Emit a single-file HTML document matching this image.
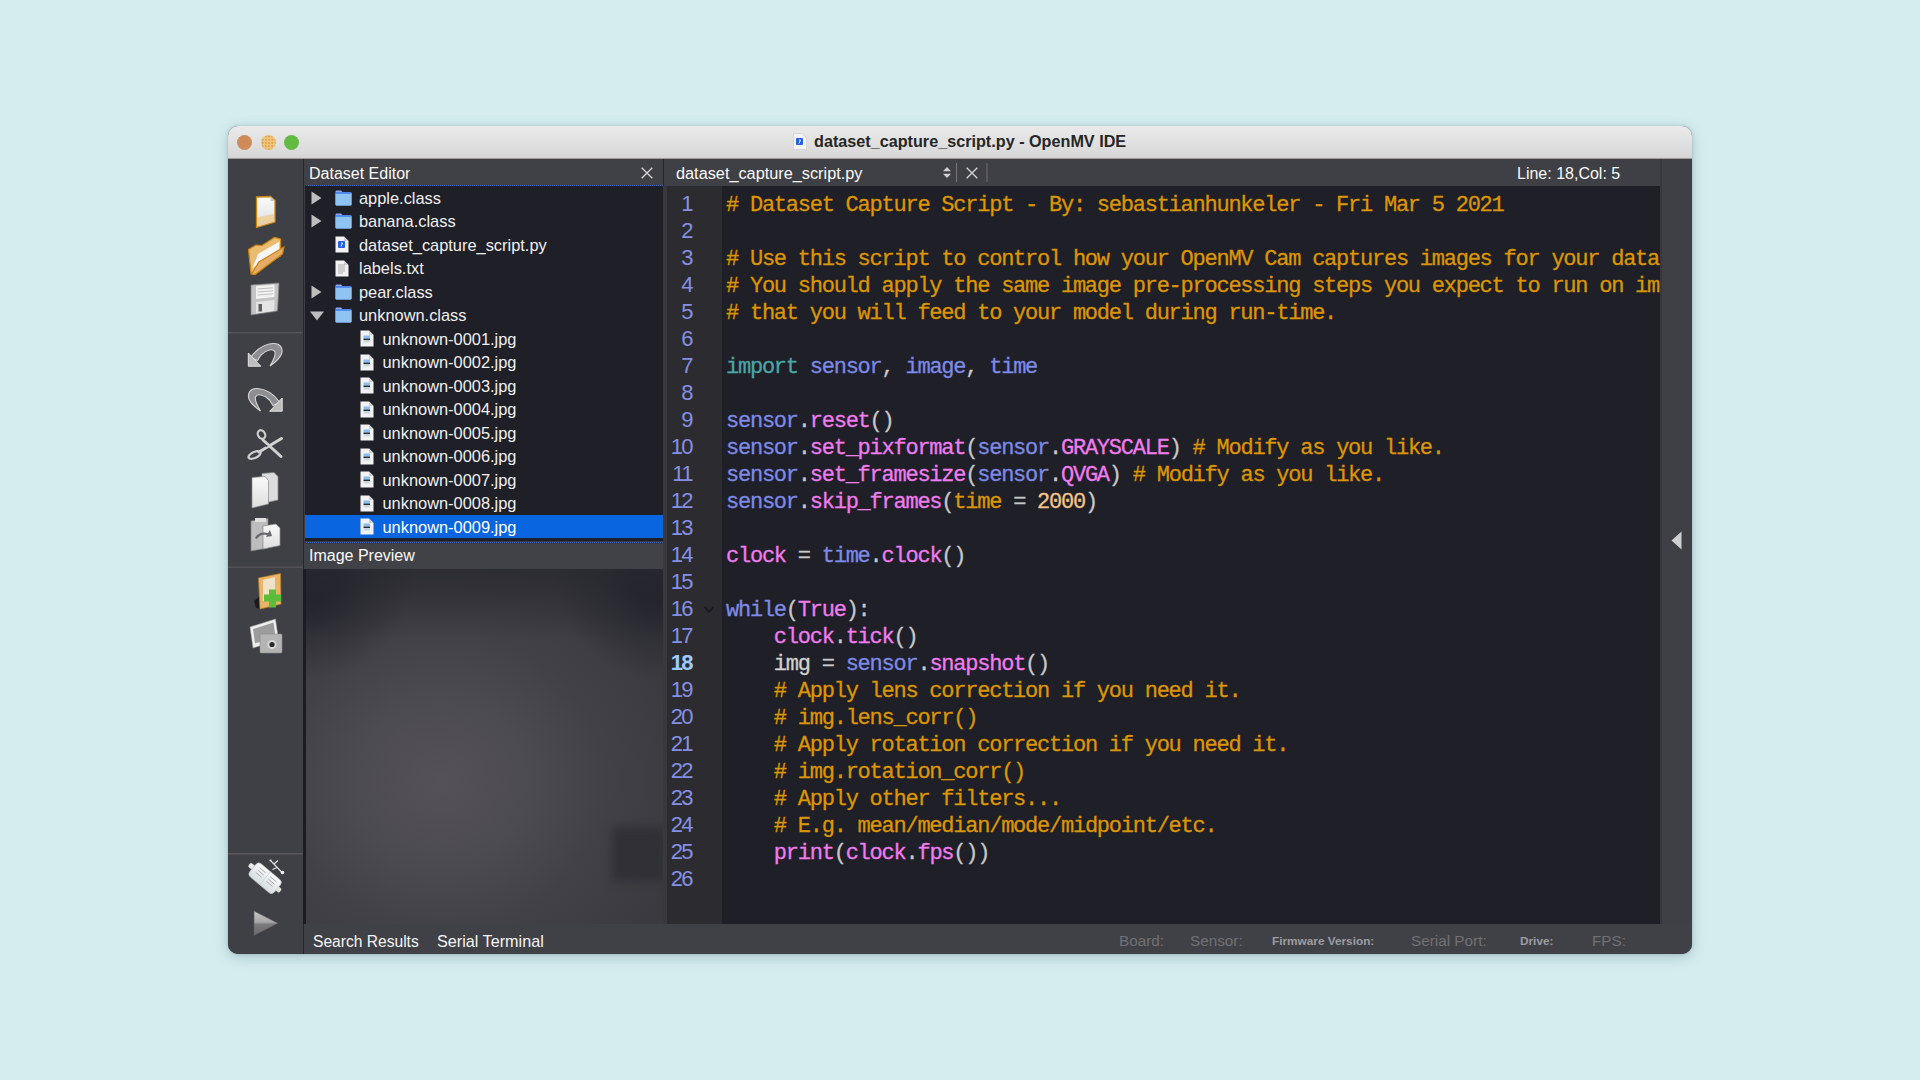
<!DOCTYPE html>
<html><head><meta charset="utf-8">
<style>
*{margin:0;padding:0;box-sizing:border-box}
html,body{width:1920px;height:1080px;overflow:hidden;background:#d5edef;font-family:"Liberation Sans",sans-serif}
div,span,svg{position:absolute}
#shadow{left:228px;top:126px;width:1464px;height:828px;border-radius:10px;box-shadow:0 3px 13px rgba(60,100,105,0.30),0 0 3px rgba(40,70,75,0.22)}
#win{left:228px;top:126px;width:1464px;height:828px;border-radius:10px;background:#3e3f44;overflow:hidden}
#title{left:0;top:0;width:1464px;height:33px;background:linear-gradient(#eaeaea,#dadada 85%,#d3d3d3);border-bottom:1.5px solid #a29c98}
.tl{top:9px;width:15px;height:15px;border-radius:50%}
#ttext{left:586px;top:6px;font-size:16.2px;font-weight:bold;color:#262626;line-height:18px;white-space:nowrap}
#tool{left:0;top:33px;width:75px;height:795px;background:#3f4045}
.vd{background:#26262b}
.phead{color:#fafafa;font-size:16px;line-height:18px;white-space:nowrap}
.row{left:0;width:358px;height:23.5px;color:#f0f0f0;font-size:16.4px;line-height:23.5px;white-space:nowrap}
.row.sel{background:#0a66e0;color:#fff}
.row span{top:0.8px}
.ln{left:0;width:464px;text-align:right;font-size:22px;letter-spacing:-1.6px;line-height:27px;margin-top:-2px;color:#8590e4;white-space:nowrap}
.ln.cur{font-weight:bold;color:#9fcbff}
.cl{left:498px;font-family:"Liberation Mono",monospace;font-size:22px;letter-spacing:-1.24px;line-height:27px;white-space:pre;color:#c8c8c8;-webkit-text-stroke:0.3px currentColor}
.cl span{position:static}
.c{color:#dc9602}.s{color:#7d8ae6}.p{color:#f07cee}.k{color:#4aa6a6}.w{color:#c8c8c8}.o{color:#f5c58a}.g{color:#d2d2cf}
.st{font-size:15.6px;color:#f4f4f4;line-height:18px;white-space:nowrap}
.sg{color:#707075;font-size:15.3px;line-height:18px;white-space:nowrap}
.sb{color:#9d9da2;font-size:11.8px;font-weight:bold;line-height:14px;white-space:nowrap}
</style></head><body>
<div id="shadow"></div>
<div id="win">
  <div id="title">
    <div class="tl" style="left:9px;background:#cf8a5a"></div>
    <div class="tl" style="left:32.5px;background:radial-gradient(circle,#e2a040 0.8px,transparent 1.1px) 0 0/3.2px 3.2px,#efc47e"></div>
    <div class="tl" style="left:56px;background:#64bb44"></div>
    <svg style="left:565px;top:7px" width="14" height="17" viewBox="0 0 14 17"><path d="M0.5 0.5 L9 0.5 L13.5 5 L13.5 16.5 L0.5 16.5Z" fill="#f4f4f4" stroke="#c8c8c8" stroke-width="0.6"/><rect x="3" y="5" width="7" height="7" rx="1" fill="#2463e0"/><path d="M6 7 L7.5 7 L6 10.5" stroke="#fff" stroke-width="0.9" fill="none"/></svg>
    <div id="ttext">dataset_capture_script.py - OpenMV IDE</div>
  </div>
  <div id="tool"></div>
<svg style="left:0;top:32px" width="75" height="796" viewBox="228 158 75 796">
<defs>
<linearGradient id="pap" x1="0" y1="0" x2="0" y2="1"><stop offset="0" stop-color="#fafafa"/><stop offset="1" stop-color="#dedede"/></linearGradient>
<linearGradient id="arr" x1="0" y1="0" x2="1" y2="1"><stop offset="0" stop-color="#dcdcdc"/><stop offset="0.5" stop-color="#9c9c9c"/><stop offset="1" stop-color="#d0d0d0"/></linearGradient>
<linearGradient id="play" x1="0" y1="0" x2="0" y2="1"><stop offset="0" stop-color="#c4c4c4"/><stop offset="0.45" stop-color="#a8a8a8"/><stop offset="0.55" stop-color="#7a7a7c"/><stop offset="1" stop-color="#6a6a6d"/></linearGradient>
<linearGradient id="usb" x1="0" y1="0" x2="0" y2="1"><stop offset="0" stop-color="#fafafa"/><stop offset="1" stop-color="#d6dde0"/></linearGradient>
</defs>
<!-- separators -->
<rect x="228" y="332" width="75" height="1.3" fill="#56555b"/>
<rect x="228" y="566.5" width="75" height="1.3" fill="#56555b"/>
<rect x="228" y="853" width="75" height="1.5" fill="#58565c"/>
<!-- new file -->
<path d="M256.5,197 L270.5,196.5 L275,200.5 L275,222 L256.5,227.5Z" fill="url(#pap)" stroke="#c8860f" stroke-width="1.3"/>
<path d="M270.5,196.5 L270.5,201 L275,201Z" fill="#c9c9c9"/>
<path d="M257.5,217 L274.3,214 L274.3,221.5 L257.5,226.5Z" fill="#f0c070" opacity="0.55"/>
<!-- open folder -->
<path d="M248.5,249.5 L256,245 L262,245.5 L274.5,237.5 L280.5,239 L280.5,256 L251,273.5Z" fill="#ebbb70" stroke="#c8860f" stroke-width="1.2"/>
<path d="M252.5,268 L258,254 L279.5,241.5 L279,252Z" fill="#f6f6f6"/>
<path d="M251.5,274 L259,262 L284,247 L282.5,254 L255,274.5Z" fill="#e6ac68" stroke="#c8860f" stroke-width="1.2"/>
<!-- floppy -->
<path d="M251,285 L279,283 L277.5,311 L251,315Z" fill="#c4c4c4" stroke="#7e7e80" stroke-width="0.8"/>
<path d="M256,286 L274.5,284.5 L274.5,297 L256,299Z" fill="#f2f2f2"/>
<path d="M257.5,289 L273,287.8 M257.5,292 L273,290.8 M257.5,295 L273,293.8" stroke="#b0b0b0" stroke-width="0.8"/>
<path d="M256,302 L274.5,300 L274,311 L256,313.5Z" fill="#e4e4e4"/>
<rect x="258.5" y="304" width="3.5" height="7.5" fill="#5e5e60"/>
<!-- undo -->
<g id="undo">
<path d="M250.5,357.5 C256,350 264,344 273,343.5 C280,343 283.5,348 281.5,354 C279.5,359 275,362.5 270,366 C273,361 276,356 275,352 C273.5,348.5 267,349 261,355 L257.5,360.5 Z" fill="#8e8e92" stroke="#d6d6d6" stroke-width="1.1"/>
<path d="M248.3,353 L248.3,366.2 L260.8,366.2 Z" fill="#bdbdbd" stroke="#e2e2e2" stroke-width="1"/>
</g>
<!-- redo -->
<g transform="translate(530.5,45) scale(-1,1)">
<path d="M250.5,357.5 C256,350 264,344 273,343.5 C280,343 283.5,348 281.5,354 C279.5,359 275,362.5 270,366 C273,361 276,356 275,352 C273.5,348.5 267,349 261,355 L257.5,360.5 Z" fill="#8e8e92" stroke="#d6d6d6" stroke-width="1.1"/>
<path d="M248.3,353 L248.3,366.2 L260.8,366.2 Z" fill="#bdbdbd" stroke="#e2e2e2" stroke-width="1"/>
</g>
<!-- scissors -->
<path d="M263,440 L281,456.5" stroke="#d2d2d2" stroke-width="3" stroke-linecap="round"/>
<path d="M259,452 L281.5,438.5" stroke="#d2d2d2" stroke-width="3" stroke-linecap="round"/>
<ellipse cx="261.5" cy="434.5" rx="3.5" ry="4.5" fill="none" stroke="#cfcfcf" stroke-width="2.2" transform="rotate(-30 261.5 434.5)"/>
<ellipse cx="254.5" cy="455" rx="6.5" ry="3" fill="none" stroke="#cfcfcf" stroke-width="2.2" transform="rotate(-25 254.5 455)"/>
<circle cx="266.5" cy="446" r="1" fill="#444"/>
<!-- copy -->
<path d="M262,473.5 L274,472.5 L278,476.5 L278,500 L262,503.5Z" fill="#dcdcdc" stroke="#8a8a8c" stroke-width="0.7"/>
<path d="M252,477.5 L265,476.5 L268.5,480.5 L268.5,504 L252,508Z" fill="url(#pap)" stroke="#8a8a8c" stroke-width="0.7"/>
<!-- paste -->
<path d="M251,521 L268,518.5 L268,548 L251,551Z" fill="#bdbdbd" stroke="#808082" stroke-width="0.7"/>
<rect x="255" y="518" width="11" height="4" fill="#e0e0e0"/>
<path d="M263,526 L276,524 L280,528 L280,545.5 L263,549Z" fill="url(#pap)" stroke="#8a8a8c" stroke-width="0.7"/>
<path d="M255,538 C258,532 264,532 268,533 L270,530 L272,536 L266,537 L267,535 C263,534 259,535 257,539Z" fill="#6a6a6c"/>
<!-- dataset add -->
<path d="M254,601 L260,596 L260,609 L256,608Z" fill="#1c1c1e"/>
<path d="M258.5,578 L280.5,573.5 L281,604 L260,609Z" fill="#e8b46a" stroke="#c08020" stroke-width="0.7"/>
<path d="M263,580 L275,577 L275,598 L263,601Z" fill="#f4f0e8" opacity="0.75"/>
<rect x="264" y="594.5" width="17" height="7" fill="#5cbd3a"/>
<rect x="269" y="589.5" width="7" height="18" fill="#5cbd3a"/>
<!-- camera + photo -->
<path d="M250,627 L275.5,619 L278.5,640 L253,648Z" fill="#f0f0f0" stroke="#9a9a9a" stroke-width="0.6"/>
<path d="M253,629 L273.5,622.5 L275.5,637 L255,643.5Z" fill="#9c9c9c"/>
<rect x="260" y="634" width="22" height="19" rx="1" fill="#b4b4b4" stroke="#8a8a8a" stroke-width="0.6"/>
<circle cx="272" cy="644.5" r="4.5" fill="#d8d8d8"/>
<circle cx="272" cy="644.5" r="2.6" fill="#2a2a2a"/>
<!-- usb -->
<g transform="rotate(40 264 878)">
<rect x="244" y="874.5" width="6" height="5" rx="1.5" fill="#e8e8e8"/>
<rect x="249" y="869" width="32" height="17" rx="4" fill="url(#usb)" stroke="#b9c4c8" stroke-width="0.6"/>
<rect x="280" y="875" width="5" height="5" rx="1.5" fill="#e0e0e0"/>
<path d="M254,873 L262,873 M254,876 L262,876 M254,879 L262,879 M268,873 L276,873 M268,876 L276,876 M268,879 L276,879" stroke="#a8a8a8" stroke-width="0.9"/>
<path d="M265,869 L265,886" stroke="#c8d4d8" stroke-width="0.8"/>
</g>
<path d="M271,861 L282,872.5 M274,864 L278,860.5 M277,867.5 L272.5,869.5" stroke="#e6e6e6" stroke-width="1.1" fill="none"/>
<circle cx="282.5" cy="872.5" r="1.8" fill="#eeeeee"/>
<circle cx="270.5" cy="860.5" r="1.1" fill="#eeeeee"/>
<!-- play -->
<path d="M254,911 L254,935.5 L278,923.2Z" fill="url(#play)" stroke="#5a5a5c" stroke-width="0.6"/>
</svg>

  <div class="vd" style="left:75px;top:33px;width:1px;height:795px"></div>
  <!-- dataset panel -->
  <div style="left:76px;top:33px;width:359px;height:26px;background:#404146"></div>
  <div class="phead" style="left:81px;top:39px">Dataset Editor</div>
  <svg style="left:413px;top:41px" width="12" height="12" viewBox="0 0 12 12"><path d="M0.7 0.7 L11.3 11.3 M11.3 0.7 L0.7 11.3" stroke="#d6d6d6" stroke-width="1.3"/></svg>
  <div style="left:80px;top:59px;width:355px;height:1px;border-top:1px dotted #3a64c8"></div>
  <div id="tree" style="left:77px;top:60px;width:358px;height:354.5px;background:#1f1f28;overflow:hidden">
<div class="row" style="top:-0.2px"><svg class="arr" style="left:6px;top:5px" width="11" height="14" viewBox="0 0 11 14"><path d="M0.5 0.5 L10.5 7 L0.5 13.5Z" fill="#bdbdbd"/></svg><svg class="ico" style="left:30px;top:4px" width="17" height="16" viewBox="0 0 17 16"><path d="M0.5 1.5 Q0.5 0.5 1.5 0.5 L6 0.5 L7.5 2 L15.5 2 Q16.5 2 16.5 3 L16.5 14.5 Q16.5 15.5 15.5 15.5 L1.5 15.5 Q0.5 15.5 0.5 14.5Z" fill="#8fa3f0"/><rect x="0.5" y="3" width="16" height="12.5" rx="1" fill="#8ec3f2"/><rect x="1" y="2.4" width="15" height="1.2" fill="#2d6fe8"/></svg><span style="left:54px">apple.class</span></div>
<div class="row" style="top:23.3px"><svg class="arr" style="left:6px;top:5px" width="11" height="14" viewBox="0 0 11 14"><path d="M0.5 0.5 L10.5 7 L0.5 13.5Z" fill="#bdbdbd"/></svg><svg class="ico" style="left:30px;top:4px" width="17" height="16" viewBox="0 0 17 16"><path d="M0.5 1.5 Q0.5 0.5 1.5 0.5 L6 0.5 L7.5 2 L15.5 2 Q16.5 2 16.5 3 L16.5 14.5 Q16.5 15.5 15.5 15.5 L1.5 15.5 Q0.5 15.5 0.5 14.5Z" fill="#8fa3f0"/><rect x="0.5" y="3" width="16" height="12.5" rx="1" fill="#8ec3f2"/><rect x="1" y="2.4" width="15" height="1.2" fill="#2d6fe8"/></svg><span style="left:54px">banana.class</span></div>
<div class="row" style="top:46.8px"><svg class="ico" style="left:30px;top:3.5px" width="14" height="17" viewBox="0 0 14 17"><path d="M0.5 0.5 L9 0.5 L13.5 5 L13.5 16.5 L0.5 16.5Z" fill="#f2f2f2"/><path d="M9 0.5 L9 5 L13.5 5" fill="#d0d0d0"/><rect x="3" y="5" width="7" height="7" rx="1" fill="#2463e0"/><path d="M6 7 L7.5 7 L6 10.5" stroke="#fff" stroke-width="0.9" fill="none"/></svg><span style="left:54px">dataset_capture_script.py</span></div>
<div class="row" style="top:70.3px"><svg class="ico" style="left:30px;top:3.5px" width="14" height="17" viewBox="0 0 14 17"><path d="M0.5 0.5 L9 0.5 L13.5 5 L13.5 16.5 L0.5 16.5Z" fill="#f2f2f2"/><path d="M9 0.5 L9 5 L13.5 5" fill="#d0d0d0"/><path d="M3 5H10M3 7H10M3 9H10M3 11H10M3 13H8" stroke="#9a9a9a" stroke-width="0.8"/></svg><span style="left:54px">labels.txt</span></div>
<div class="row" style="top:93.8px"><svg class="arr" style="left:6px;top:5px" width="11" height="14" viewBox="0 0 11 14"><path d="M0.5 0.5 L10.5 7 L0.5 13.5Z" fill="#bdbdbd"/></svg><svg class="ico" style="left:30px;top:4px" width="17" height="16" viewBox="0 0 17 16"><path d="M0.5 1.5 Q0.5 0.5 1.5 0.5 L6 0.5 L7.5 2 L15.5 2 Q16.5 2 16.5 3 L16.5 14.5 Q16.5 15.5 15.5 15.5 L1.5 15.5 Q0.5 15.5 0.5 14.5Z" fill="#8fa3f0"/><rect x="0.5" y="3" width="16" height="12.5" rx="1" fill="#8ec3f2"/><rect x="1" y="2.4" width="15" height="1.2" fill="#2d6fe8"/></svg><span style="left:54px">pear.class</span></div>
<div class="row" style="top:117.3px"><svg class="arr" style="left:4.5px;top:8px" width="14" height="10" viewBox="0 0 14 10"><path d="M0 0.5 L14 0.5 L7 9.5Z" fill="#bdbdbd"/></svg><svg class="ico" style="left:30px;top:4px" width="17" height="16" viewBox="0 0 17 16"><path d="M0.5 1.5 Q0.5 0.5 1.5 0.5 L6 0.5 L7.5 2 L15.5 2 Q16.5 2 16.5 3 L16.5 14.5 Q16.5 15.5 15.5 15.5 L1.5 15.5 Q0.5 15.5 0.5 14.5Z" fill="#8fa3f0"/><rect x="0.5" y="3" width="16" height="12.5" rx="1" fill="#8ec3f2"/><rect x="1" y="2.4" width="15" height="1.2" fill="#2d6fe8"/></svg><span style="left:54px">unknown.class</span></div>
<div class="row" style="top:140.8px"><svg class="ico" style="left:55px;top:3.5px" width="14" height="17" viewBox="0 0 14 17"><path d="M0.5 0.5 L9 0.5 L13.5 5 L13.5 16.5 L0.5 16.5Z" fill="#f2f2f2"/><path d="M9 0.5 L9 5 L13.5 5" fill="#d0d0d0"/><rect x="3.5" y="5.5" width="6.5" height="3.3" fill="#86c0f0"/><rect x="3.5" y="8.6" width="6.5" height="1.4" fill="#2a2a30"/><rect x="3.5" y="10" width="6.5" height="2.5" fill="#c8d8e0"/></svg><span style="left:77.5px">unknown-0001.jpg</span></div>
<div class="row" style="top:164.3px"><svg class="ico" style="left:55px;top:3.5px" width="14" height="17" viewBox="0 0 14 17"><path d="M0.5 0.5 L9 0.5 L13.5 5 L13.5 16.5 L0.5 16.5Z" fill="#f2f2f2"/><path d="M9 0.5 L9 5 L13.5 5" fill="#d0d0d0"/><rect x="3.5" y="5.5" width="6.5" height="3.3" fill="#86c0f0"/><rect x="3.5" y="8.6" width="6.5" height="1.4" fill="#2a2a30"/><rect x="3.5" y="10" width="6.5" height="2.5" fill="#c8d8e0"/></svg><span style="left:77.5px">unknown-0002.jpg</span></div>
<div class="row" style="top:187.8px"><svg class="ico" style="left:55px;top:3.5px" width="14" height="17" viewBox="0 0 14 17"><path d="M0.5 0.5 L9 0.5 L13.5 5 L13.5 16.5 L0.5 16.5Z" fill="#f2f2f2"/><path d="M9 0.5 L9 5 L13.5 5" fill="#d0d0d0"/><rect x="3.5" y="5.5" width="6.5" height="3.3" fill="#86c0f0"/><rect x="3.5" y="8.6" width="6.5" height="1.4" fill="#2a2a30"/><rect x="3.5" y="10" width="6.5" height="2.5" fill="#c8d8e0"/></svg><span style="left:77.5px">unknown-0003.jpg</span></div>
<div class="row" style="top:211.3px"><svg class="ico" style="left:55px;top:3.5px" width="14" height="17" viewBox="0 0 14 17"><path d="M0.5 0.5 L9 0.5 L13.5 5 L13.5 16.5 L0.5 16.5Z" fill="#f2f2f2"/><path d="M9 0.5 L9 5 L13.5 5" fill="#d0d0d0"/><rect x="3.5" y="5.5" width="6.5" height="3.3" fill="#86c0f0"/><rect x="3.5" y="8.6" width="6.5" height="1.4" fill="#2a2a30"/><rect x="3.5" y="10" width="6.5" height="2.5" fill="#c8d8e0"/></svg><span style="left:77.5px">unknown-0004.jpg</span></div>
<div class="row" style="top:234.8px"><svg class="ico" style="left:55px;top:3.5px" width="14" height="17" viewBox="0 0 14 17"><path d="M0.5 0.5 L9 0.5 L13.5 5 L13.5 16.5 L0.5 16.5Z" fill="#f2f2f2"/><path d="M9 0.5 L9 5 L13.5 5" fill="#d0d0d0"/><rect x="3.5" y="5.5" width="6.5" height="3.3" fill="#86c0f0"/><rect x="3.5" y="8.6" width="6.5" height="1.4" fill="#2a2a30"/><rect x="3.5" y="10" width="6.5" height="2.5" fill="#c8d8e0"/></svg><span style="left:77.5px">unknown-0005.jpg</span></div>
<div class="row" style="top:258.3px"><svg class="ico" style="left:55px;top:3.5px" width="14" height="17" viewBox="0 0 14 17"><path d="M0.5 0.5 L9 0.5 L13.5 5 L13.5 16.5 L0.5 16.5Z" fill="#f2f2f2"/><path d="M9 0.5 L9 5 L13.5 5" fill="#d0d0d0"/><rect x="3.5" y="5.5" width="6.5" height="3.3" fill="#86c0f0"/><rect x="3.5" y="8.6" width="6.5" height="1.4" fill="#2a2a30"/><rect x="3.5" y="10" width="6.5" height="2.5" fill="#c8d8e0"/></svg><span style="left:77.5px">unknown-0006.jpg</span></div>
<div class="row" style="top:281.8px"><svg class="ico" style="left:55px;top:3.5px" width="14" height="17" viewBox="0 0 14 17"><path d="M0.5 0.5 L9 0.5 L13.5 5 L13.5 16.5 L0.5 16.5Z" fill="#f2f2f2"/><path d="M9 0.5 L9 5 L13.5 5" fill="#d0d0d0"/><rect x="3.5" y="5.5" width="6.5" height="3.3" fill="#86c0f0"/><rect x="3.5" y="8.6" width="6.5" height="1.4" fill="#2a2a30"/><rect x="3.5" y="10" width="6.5" height="2.5" fill="#c8d8e0"/></svg><span style="left:77.5px">unknown-0007.jpg</span></div>
<div class="row" style="top:305.3px"><svg class="ico" style="left:55px;top:3.5px" width="14" height="17" viewBox="0 0 14 17"><path d="M0.5 0.5 L9 0.5 L13.5 5 L13.5 16.5 L0.5 16.5Z" fill="#f2f2f2"/><path d="M9 0.5 L9 5 L13.5 5" fill="#d0d0d0"/><rect x="3.5" y="5.5" width="6.5" height="3.3" fill="#86c0f0"/><rect x="3.5" y="8.6" width="6.5" height="1.4" fill="#2a2a30"/><rect x="3.5" y="10" width="6.5" height="2.5" fill="#c8d8e0"/></svg><span style="left:77.5px">unknown-0008.jpg</span></div>
<div class="row sel" style="top:328.8px"><svg class="ico" style="left:55px;top:3.5px" width="14" height="17" viewBox="0 0 14 17"><path d="M0.5 0.5 L9 0.5 L13.5 5 L13.5 16.5 L0.5 16.5Z" fill="#f2f2f2"/><path d="M9 0.5 L9 5 L13.5 5" fill="#d0d0d0"/><rect x="3.5" y="5.5" width="6.5" height="3.3" fill="#86c0f0"/><rect x="3.5" y="8.6" width="6.5" height="1.4" fill="#2a2a30"/><rect x="3.5" y="10" width="6.5" height="2.5" fill="#c8d8e0"/></svg><span style="left:77.5px">unknown-0009.jpg</span></div>
  </div>
  <div style="left:76px;top:414.5px;width:359px;height:3.5px;background:#3a3a40"></div>
  <div style="left:78px;top:416px;width:357px;height:1px;border-top:1px dotted #3a64c8"></div>
  <div style="left:76px;top:418px;width:359px;height:25px;background:#414247"></div>
  <div class="phead" style="left:81px;top:421px">Image Preview</div>
  <div style="left:75px;top:443px;width:3px;height:355px;background:#1c1c25"></div>
  <div id="preview" style="left:78px;top:443px;width:357px;height:355px;overflow:hidden;background:radial-gradient(ellipse 70% 65% at 38% 60%,#545258 0%,#4c4b51 35%,#424147 65%,#3a3a40 100%)">
    <div style="left:0;top:0;width:357px;height:355px;background:radial-gradient(circle 110px at 0 0,#20202a 0%,#22222b 30%,rgba(38,38,46,0.55) 60%,rgba(40,40,47,0) 100%),radial-gradient(circle 110px at 357px 0,#20202a 0%,#22222b 30%,rgba(38,38,46,0.55) 60%,rgba(40,40,47,0) 100%)"></div>
    <div style="left:0;top:0;width:358px;height:70px;background:linear-gradient(rgba(40,40,47,0.8),rgba(44,44,51,0))"></div>
    <div style="left:306px;top:258px;width:54px;height:54px;background:#303036;filter:blur(5px)"></div>
  </div>
  <!-- editor -->
  <div class="vd" style="left:435px;top:33px;width:1px;height:765px"></div>
  <div style="left:436px;top:33px;width:996px;height:27px;background:#3f4045"></div>
  <div class="phead" style="left:448px;top:38px;font-size:16.3px">dataset_capture_script.py</div>
  <svg style="left:714px;top:40px" width="10" height="13" viewBox="0 0 10 13"><path d="M1 5.3 L5 1 L9 5.3Z M1 7.7 L5 12 L9 7.7Z" fill="#d0d0d0"/></svg>
  <div style="left:728px;top:37px;width:1.2px;height:19px;background:#77777c"></div>
  <svg style="left:738px;top:41px" width="12" height="12" viewBox="0 0 12 12"><path d="M0.7 0.7 L11.3 11.3 M11.3 0.7 L0.7 11.3" stroke="#d6d6d6" stroke-width="1.3"/></svg>
  <div style="left:758px;top:37px;width:2px;height:19px;background:#58565c"></div>
  <div class="phead" style="left:1289px;top:39px;font-size:16px">Line: 18,Col: 5</div>
  <div style="left:435px;top:60px;width:997px;height:738px;background:#1f1f28"></div>
  <div style="left:435px;top:60px;width:4px;height:738px;background:#39383d"></div>
  <div style="left:439px;top:60px;width:55px;height:738px;background:#2c2c30"></div>
  <svg style="left:476px;top:480px" width="10" height="7" viewBox="0 0 10 7"><path d="M0.5 0.8 L5 6 L9.5 0.8" stroke="#1a1a22" stroke-width="2" fill="none"/></svg>
  <div id="code" style="left:0;top:0;width:1432px;height:798px;overflow:hidden">
<div class="cl" style="top:66px"><span class="c"># Dataset Capture Script - By: sebastianhunkeler - Fri Mar 5 2021</span></div>
<div class="ln" style="top:66px">1</div>
<div class="cl" style="top:93px"></div>
<div class="ln" style="top:93px">2</div>
<div class="cl" style="top:120px"><span class="c"># Use this script to control how your OpenMV Cam captures images for your dataset.</span></div>
<div class="ln" style="top:120px">3</div>
<div class="cl" style="top:147px"><span class="c"># You should apply the same image pre-processing steps you expect to run on images</span></div>
<div class="ln" style="top:147px">4</div>
<div class="cl" style="top:174px"><span class="c"># that you will feed to your model during run-time.</span></div>
<div class="ln" style="top:174px">5</div>
<div class="cl" style="top:201px"></div>
<div class="ln" style="top:201px">6</div>
<div class="cl" style="top:228px"><span class="k">import</span><span class="w"> </span><span class="s">sensor</span><span class="w">, </span><span class="s">image</span><span class="w">, </span><span class="s">time</span></div>
<div class="ln" style="top:228px">7</div>
<div class="cl" style="top:255px"></div>
<div class="ln" style="top:255px">8</div>
<div class="cl" style="top:282px"><span class="s">sensor</span><span class="w">.</span><span class="p">reset</span><span class="w">()</span></div>
<div class="ln" style="top:282px">9</div>
<div class="cl" style="top:309px"><span class="s">sensor</span><span class="w">.</span><span class="p">set_pixformat</span><span class="w">(</span><span class="s">sensor</span><span class="w">.</span><span class="p">GRAYSCALE</span><span class="w">) </span><span class="c"># Modify as you like.</span></div>
<div class="ln" style="top:309px">10</div>
<div class="cl" style="top:336px"><span class="s">sensor</span><span class="w">.</span><span class="p">set_framesize</span><span class="w">(</span><span class="s">sensor</span><span class="w">.</span><span class="p">QVGA</span><span class="w">) </span><span class="c"># Modify as you like.</span></div>
<div class="ln" style="top:336px">11</div>
<div class="cl" style="top:363px"><span class="s">sensor</span><span class="w">.</span><span class="p">skip_frames</span><span class="w">(</span><span class="c">time</span><span class="w"> = </span><span class="o">2000</span><span class="w">)</span></div>
<div class="ln" style="top:363px">12</div>
<div class="cl" style="top:390px"></div>
<div class="ln" style="top:390px">13</div>
<div class="cl" style="top:417px"><span class="p">clock</span><span class="w"> = </span><span class="s">time</span><span class="w">.</span><span class="p">clock</span><span class="w">()</span></div>
<div class="ln" style="top:417px">14</div>
<div class="cl" style="top:444px"></div>
<div class="ln" style="top:444px">15</div>
<div class="cl" style="top:471px"><span class="s">while</span><span class="w">(</span><span class="p">True</span><span class="w">):</span></div>
<div class="ln" style="top:471px">16</div>
<div class="cl" style="top:498px"><span class="w">    </span><span class="p">clock</span><span class="w">.</span><span class="p">tick</span><span class="w">()</span></div>
<div class="ln" style="top:498px">17</div>
<div class="cl" style="top:525px"><span class="w">    </span><span class="g">img</span><span class="w"> = </span><span class="s">sensor</span><span class="w">.</span><span class="p">snapshot</span><span class="w">()</span></div>
<div class="ln cur" style="top:525px">18</div>
<div class="cl" style="top:552px"><span class="w">    </span><span class="c"># Apply lens correction if you need it.</span></div>
<div class="ln" style="top:552px">19</div>
<div class="cl" style="top:579px"><span class="w">    </span><span class="c"># img.lens_corr()</span></div>
<div class="ln" style="top:579px">20</div>
<div class="cl" style="top:606px"><span class="w">    </span><span class="c"># Apply rotation correction if you need it.</span></div>
<div class="ln" style="top:606px">21</div>
<div class="cl" style="top:633px"><span class="w">    </span><span class="c"># img.rotation_corr()</span></div>
<div class="ln" style="top:633px">22</div>
<div class="cl" style="top:660px"><span class="w">    </span><span class="c"># Apply other filters...</span></div>
<div class="ln" style="top:660px">23</div>
<div class="cl" style="top:687px"><span class="w">    </span><span class="c"># E.g. mean/median/mode/midpoint/etc.</span></div>
<div class="ln" style="top:687px">24</div>
<div class="cl" style="top:714px"><span class="w">    </span><span class="p">print</span><span class="w">(</span><span class="p">clock</span><span class="w">.</span><span class="p">fps</span><span class="w">())</span></div>
<div class="ln" style="top:714px">25</div>
<div class="cl" style="top:741px"></div>
<div class="ln" style="top:741px">26</div>
  </div>
  <div style="left:1432px;top:33px;width:32px;height:765px;background:#3f4045"></div>
  <div style="left:1432px;top:33px;width:1.5px;height:765px;background:#37373c"></div>
  <svg style="left:1443px;top:405px" width="11" height="19" viewBox="0 0 11 19"><path d="M10.5 0.5 L0.5 9.5 L10.5 18.5Z" fill="#cfcfcf"/></svg>
  <!-- status -->
  <div style="left:76px;top:798px;width:1388px;height:30px;background:#404146"></div>
  <div class="st" style="left:85px;top:807px">Search Results</div>
  <div class="st" style="left:209px;top:806px;font-size:16.2px">Serial Terminal</div>
  <div class="sg" style="left:891px;top:806px">Board:</div>
  <div class="sg" style="left:962px;top:806px">Sensor:</div>
  <div class="sb" style="left:1044px;top:808px">Firmware Version:</div>
  <div class="sg" style="left:1183px;top:806px">Serial Port:</div>
  <div class="sb" style="left:1292px;top:808px">Drive:</div>
  <div class="sg" style="left:1364px;top:806px">FPS:</div>
</div>
</body></html>
